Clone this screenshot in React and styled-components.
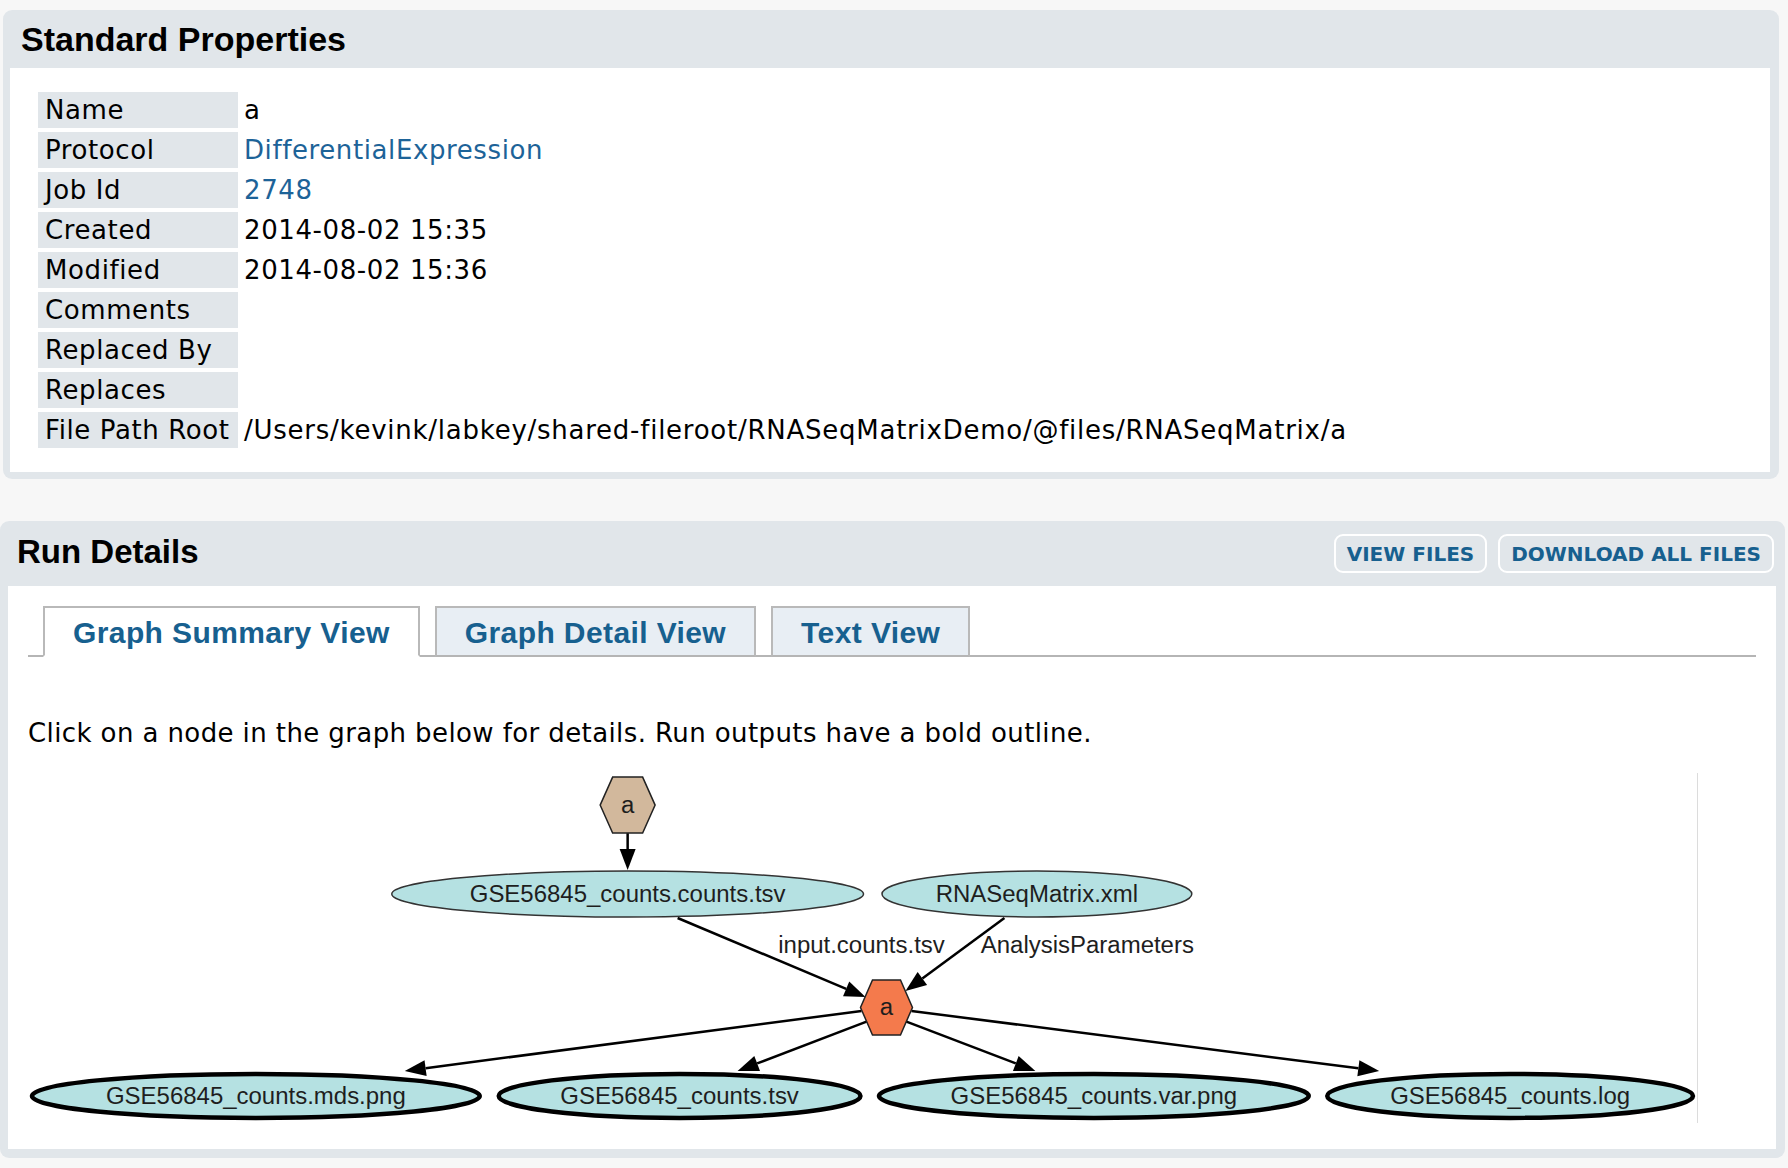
import React from "react";
import styled, { createGlobalStyle } from "styled-components";

const GlobalStyle = createGlobalStyle`
  html, body {
    margin: 0;
    padding: 0;
    background: #f7f7f7;
  }
  body {
    font-family: "DejaVu Sans", Verdana, sans-serif;
    color: #000;
  }
`;

const Page = styled.div`
  width: 1788px;
  padding-top: 10px;
`;

const Panel = styled.section`
  box-sizing: border-box;
  width: ${(p) => p.$width}px;
  margin-left: ${(p) => p.$left}px;
  margin-top: ${(p) => p.$top || 0}px;
  padding: 0 ${(p) => p.$inR}px ${(p) => p.$inB}px ${(p) => p.$inL}px;
  background: #e1e6ea;
  border-radius: 9px;
`;

const Header = styled.div`
  display: flex;
  align-items: center;
  justify-content: space-between;
  height: ${(p) => p.$height}px;
  padding-left: ${(p) => p.$padL}px;
`;

const Title = styled.h2`
  margin: 0 0 ${(p) => p.$lift || 0}px 0;
  font-family: "Liberation Sans", Arial, sans-serif;
  font-weight: bold;
  font-size: ${(p) => p.$size || 33}px;
  line-height: 1;
  color: #000;
`;

const ButtonRow = styled.div`
  display: flex;
  gap: 11px;
  margin-right: 2px;
`;

const HeaderButton = styled.button`
  box-sizing: border-box;
  height: 39px;
  padding: 0 11px;
  border: 2px solid #fff;
  border-radius: 9px;
  background: #e1e6ea;
  color: #17608f;
  font-family: "DejaVu Sans", Verdana, sans-serif;
  font-weight: bold;
  font-size: 20px;
  text-transform: uppercase;
  cursor: pointer;
`;

const Body = styled.div`
  background: #fff;
  padding: ${(p) => p.$pad};
`;

const PropGrid = styled.div`
  display: grid;
  grid-template-columns: 200px 1fr;
  column-gap: 4px;
  row-gap: 4px;
  font-size: 26px;
  letter-spacing: 0.6px;
`;

const PropLabel = styled.div`
  height: 36px;
  line-height: 36px;
  padding-left: 7px;
  background: #e1e6ea;
  white-space: nowrap;
`;

const PropValue = styled.div`
  height: 36px;
  line-height: 36px;
  padding-left: 2px;
  white-space: nowrap;
  letter-spacing: ${(p) => (p.$wide ? "0.75px" : "inherit")};
`;

const Link = styled.a`
  color: #1d6398;
  text-decoration: none;
`;

const TabStrip = styled.div`
  display: flex;
  align-items: flex-end;
  gap: 15px;
  padding-left: 15px;
  border-bottom: 2px solid #b5b5b5;
`;

const Tab = styled.div`
  box-sizing: border-box;
  height: 51px;
  margin-bottom: -2px;
  padding: 2px 28px 0;
  border: 2px solid #b9b9b9;
  border-bottom-color: ${(p) => (p.$active ? "#fff" : "#b5b5b5")};
  background: ${(p) => (p.$active ? "#fff" : "#e8eef4")};
  font-family: "Liberation Sans", Arial, sans-serif;
  font-weight: bold;
  font-size: 30px;
  line-height: 45px;
  letter-spacing: 0.4px;
  color: #17608f;
  white-space: nowrap;
  cursor: pointer;
`;

const Hint = styled.p`
  margin: 58px 0 0;
  font-size: 26px;
  line-height: 36px;
  letter-spacing: 0.4px;
`;

const GraphBox = styled.svg`
  display: block;
  margin-top: 22px;
  border-right: 1px solid #dcdcdc;
  box-sizing: border-box;
`;

const properties = [
  ["Name", "a"],
  ["Protocol", "DifferentialExpression", true],
  ["Job Id", "2748", true],
  ["Created", "2014-08-02 15:35"],
  ["Modified", "2014-08-02 15:36"],
  ["Comments", ""],
  ["Replaced By", ""],
  ["Replaces", ""],
  ["File Path Root", "/Users/kevink/labkey/shared-fileroot/RNASeqMatrixDemo/@files/RNASeqMatrix/a"],
];

const labelFont = {
  fontFamily: '"Liberation Sans", Arial, sans-serif',
  fontSize: 24,
  fill: "#1e1e1e",
  textAnchor: "middle",
};

function Arrow({ x1, y1, x2, y2 }) {
  const len = 21;
  const half = 8;
  const dx = x2 - x1;
  const dy = y2 - y1;
  const d = Math.hypot(dx, dy);
  const ux = dx / d;
  const uy = dy / d;
  const bx = x2 - ux * len;
  const by = y2 - uy * len;
  const px = -uy * half;
  const py = ux * half;
  return (
    <g>
      <line x1={x1} y1={y1} x2={bx} y2={by} stroke="#000" strokeWidth="2.5" />
      <polygon
        points={`${x2},${y2} ${bx + px},${by + py} ${bx - px},${by - py}`}
        fill="#000"
      />
    </g>
  );
}

function Hexagon({ cx, cy, w, h, edge, fill }) {
  const t = edge / 2;
  const r = w / 2;
  const v = h / 2;
  const pts = [
    [cx - t, cy - v],
    [cx + t, cy - v],
    [cx + r, cy],
    [cx + t, cy + v],
    [cx - t, cy + v],
    [cx - r, cy],
  ]
    .map((p) => p.join(","))
    .join(" ");
  return (
    <g>
      <polygon points={pts} fill={fill} stroke="#222" strokeWidth="1.5" />
      <text x={cx} y={cy + 8} style={labelFont}>
        a
      </text>
    </g>
  );
}

function FileNode({ cx, cy, rx, ry, label, output }) {
  return (
    <g>
      <ellipse
        cx={cx}
        cy={cy}
        rx={rx}
        ry={ry}
        fill="#b5e1e2"
        stroke={output ? "#000" : "#333"}
        strokeWidth={output ? 4.5 : 1.5}
      />
      <text x={cx} y={cy + 8} style={labelFont}>
        {label}
      </text>
    </g>
  );
}

function RunGraph() {
  return (
    <GraphBox width="1670" height="350" viewBox="28 773 1670 350">
      <Arrow x1={628} y1={833} x2={628} y2={870} />
      <Arrow x1={678} y1={918} x2={866} y2={997} />
      <Arrow x1={1005} y1={918} x2={906} y2={991} />
      <Arrow x1={862} y1={1011} x2={405} y2={1071} />
      <Arrow x1={869} y1={1021} x2={738} y2={1071} />
      <Arrow x1={905} y1={1021} x2={1036} y2={1071} />
      <Arrow x1={912} y1={1011} x2={1380} y2={1071} />

      <Hexagon cx={628} cy={805} w={55} h={56} edge={30} fill="#d2b89c" />
      <Hexagon cx={887} cy={1007.5} w={52} h={55} edge={28} fill="#f47a4c" />

      <FileNode cx={628} cy={894} rx={236} ry={23} label="GSE56845_counts.counts.tsv" />
      <FileNode cx={1037.5} cy={894} rx={155} ry={23} label="RNASeqMatrix.xml" />

      <text x={862} y={953} style={labelFont}>
        input.counts.tsv
      </text>
      <text x={1088} y={953} style={labelFont}>
        AnalysisParameters
      </text>

      <FileNode cx={256} cy={1096} rx={224} ry={22} label="GSE56845_counts.mds.png" output />
      <FileNode cx={680} cy={1096} rx={181} ry={22} label="GSE56845_counts.tsv" output />
      <FileNode cx={1094.5} cy={1096} rx={215} ry={22} label="GSE56845_counts.var.png" output />
      <FileNode cx={1511} cy={1096} rx={183} ry={22} label="GSE56845_counts.log" output />
    </GraphBox>
  );
}

export default function App() {
  return (
    <Page>
      <GlobalStyle />
      <Panel $width={1776} $left={3} $inL={7} $inR={9} $inB={7}>
        <Header $height={58} $padL={11}>
          <Title $size={34}>Standard Properties</Title>
        </Header>
        <Body $pad="24px 28px">
          <PropGrid>
            {properties.map(([label, value, link]) => (
              <React.Fragment key={label}>
                <PropLabel>{label}</PropLabel>
                <PropValue $wide={label === "File Path Root"}>
                  {link ? <Link href="#">{value}</Link> : value}
                </PropValue>
              </React.Fragment>
            ))}
          </PropGrid>
        </Body>
      </Panel>

      <Panel $width={1785} $left={0} $top={42} $inL={8} $inR={9} $inB={9}>
        <Header $height={65} $padL={9}>
          <Title $lift={4}>Run Details</Title>
          <ButtonRow>
            <HeaderButton>View Files</HeaderButton>
            <HeaderButton>Download All Files</HeaderButton>
          </ButtonRow>
        </Header>
        <Body $pad="20px 20px 26px">
          <TabStrip>
            <Tab $active>Graph Summary View</Tab>
            <Tab>Graph Detail View</Tab>
            <Tab>Text View</Tab>
          </TabStrip>
          <Hint>Click on a node in the graph below for details. Run outputs have a bold outline.</Hint>
          <RunGraph />
        </Body>
      </Panel>
    </Page>
  );
}
